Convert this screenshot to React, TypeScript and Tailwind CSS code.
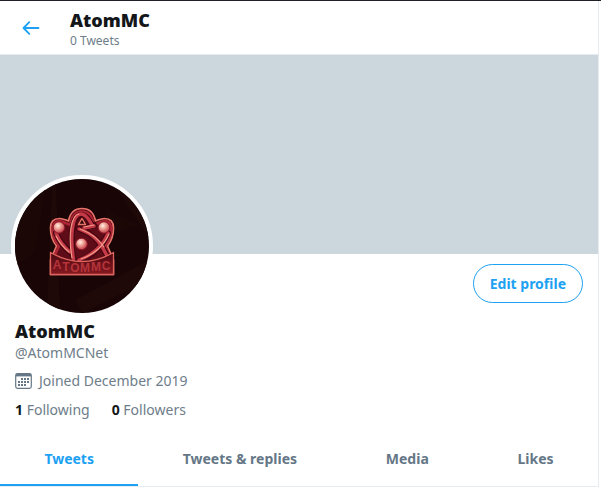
import { useState } from 'react';

const tabs = ['Tweets', 'Tweets & replies', 'Media', 'Likes'];

function BackArrow() {
  return (
    <svg width="18" height="16" viewBox="0 0 18 16" fill="none" stroke="#1da1f2" strokeWidth="1.8" strokeLinecap="round" strokeLinejoin="round" aria-hidden="true">
      <path d="M16.5 8H1.5M7.3 2.2L1.5 8l5.8 5.8" />
    </svg>
  );
}

function CalendarIcon() {
  return (
    <svg width="17" height="16" viewBox="0 0 17 16" aria-hidden="true">
      <rect x="0.7" y="0.7" width="15.6" height="14.6" rx="1.8" fill="none" stroke="#657786" strokeWidth="1.2" />
      <path d="M1 1h15v2.4H1z" fill="#657786" />
      <g fill="#657786">
        <path d="M6 5h2v2H6zM9 5h2v2H9zM12 5h2v2h-2z" />
        <path d="M3 8h2v2H3zM6 8h2v2H6zM9 8h2v2H9zM12 8h2v2h-2z" />
        <path d="M3 11h2v2H3zM6 11h2v2H6zM9 11h2v2H9z" />
      </g>
    </svg>
  );
}

function Avatar() {
  return (
    <svg className="block size-full" viewBox="15 179 134 134" role="img" aria-label="AtomMC logo">
      <defs>
        <radialGradient id="ball" cx="0.4" cy="0.35" r="0.65">
          <stop offset="0" stopColor="#fff1e8" />
          <stop offset="0.35" stopColor="#f3b0a2" />
          <stop offset="1" stopColor="#c23c46" />
        </radialGradient>
        <linearGradient id="plate" x1="0" y1="0" x2="0" y2="1">
          <stop offset="0" stopColor="#4d0812" />
          <stop offset="1" stopColor="#861820" />
        </linearGradient>
      </defs>
      <path d="M15 179h134v134H15z" fill="#190506" />
      <path d="M52 179l-5 134h13l-4-134zM110 179l39 59v-59zM75 300l74-40v20l-66 33z" fill="#1e0808" />
      <path d="M15 220l32-40-12 72-20 15zM105 210l35 15-28 9z" fill="#1c0707" />
      <path d="M50.500 274.500V260l6-14c-4-5-6-11-6-18 0-7 4-9.500 9-9.500 4 0 6 1.500 9 2.500 1.500-8 6-12.500 13.500-12.500S94 213 95.500 221c3-1 5-2.500 9-2.500 5 0 9 2.500 9 9.500s-2 13-6 18l6 14v14.500z" fill="#5e0c18" stroke="#e67469" strokeWidth="1.700" strokeLinejoin="round" />
      <path d="M53.500 258l5.500-12c-4-5-6.500-12-6-18 .5-6 4-7.500 8.500-6.500l9 3.500c1-8 4.500-13.500 11.500-13.500S92.500 217 93.500 225l9-3.500c5-1 8 .5 8.500 6.500s-2.500 13-6 18l5.500 12" fill="none" stroke="#ae2636" strokeWidth="2.600" />
      <g fill="none" strokeLinecap="round">
        <g stroke="#480611" strokeWidth="6">
          <path d="M73.500 260c-4-24-1-45 7.500-45 5 0 9 6 11 11" />
          <path d="M56 233c4 10 9 15 16 21M108 233c-5 13-17 24-30 28" />
          <path d="M79 229c14 5 21 12 28 27M81 228l13-3" />
        </g>
        <g stroke="#c43947" strokeWidth="3.400">
          <path d="M73.500 259c-4-24-1-45 7.500-45 5 0 9 7 11 11" />
          <path d="M56 233c4 10 9 15 14 19M108 233c-5 13-17 23-29 27" />
          <path d="M79 229c14 5 21 12 28 27M84 228l10-2" />
        </g>
        <g stroke="#f19a88" strokeWidth="1.200">
          <path d="M72 258c-4-23-1-43 7-44" />
          <path d="M56 236c4 8 8 12 13 16M109 234c-5 12-16 21-28 25" />
          <path d="M80 229c11 4 18 9 24 18M84 227l10-2" />
        </g>
      </g>
      <path d="M78.500 224.500l3.500-6 3.500 6z" fill="#2e060c" stroke="#e77468" strokeWidth="1.400" strokeLinejoin="round" />
      <g fill="url(#ball)" stroke="#8a1726" strokeWidth="1">
        <circle cx="59" cy="227.500" r="5.800" />
        <circle cx="104" cy="227.500" r="5.800" />
        <circle cx="81.500" cy="244" r="5.800" />
      </g>
      <path d="M50.500 274.500v-22q31.500 18 63 0v22z" fill="url(#plate)" stroke="#dd655d" strokeWidth="1.300" />
      <text textAnchor="middle" fill="#b5343a" className="font-['Liberation_Sans',sans-serif] text-[12px] font-bold">
        <tspan x="57" y="269">A</tspan>
        <tspan x="66" y="271">T</tspan>
        <tspan x="75" y="272">O</tspan>
        <tspan x="85" y="272">M</tspan>
        <tspan x="96" y="271">M</tspan>
        <tspan x="106" y="270">C</tspan>
      </text>
    </svg>
  );
}

export default function App() {
  const [active, setActive] = useState('Tweets');
  return (
    <div className="border-t border-[#202026] bg-white pr-0.5 font-['Noto_Sans','Open_Sans',sans-serif] text-[14px] leading-5 text-[#6e7d89]">
      <main className="border-r border-b border-[#e6ecf0]">
        <header className="flex h-[54px] items-center border-b border-[#e6ecf0] pl-[22px]">
          <button type="button" aria-label="Back" className="mr-[30px] cursor-pointer">
            <BackArrow />
          </button>
          <div className="pt-0.5">
            <h2 className="text-[18px] leading-6 font-black text-[#14171a]">AtomMC</h2>
            <p className="text-[12px] leading-[18px]">0 Tweets</p>
          </div>
        </header>
        <div className="h-[199px] bg-[#ccd6dd]" />
        <section className="px-[15px]">
          <div className="flex items-start justify-between pt-2.5">
            <div className="-mt-[89px] -ml-1 size-[142px] overflow-hidden rounded-full border-4 border-white">
              <Avatar />
            </div>
            <button type="button" className="h-[39px] cursor-pointer rounded-full border border-[#1da1f2] px-4 font-bold text-[#1da1f2]">
              Edit profile
            </button>
          </div>
          <h1 className="mt-0.5 text-[18px] leading-6 font-black text-[#14171a]">AtomMC</h1>
          <p>@AtomMCNet</p>
          <p className="mt-2 flex items-center gap-[7px]">
            <CalendarIcon />
            Joined December 2019
          </p>
          <div className="mt-[9px] flex gap-[22px]">
            <a href="#following"><strong className="font-bold text-[#14171a]">1</strong> Following</a>
            <a href="#followers"><strong className="font-bold text-[#14171a]">0</strong> Followers</a>
          </div>
        </section>
        <nav className="mt-3 flex">
          {tabs.map((tab) => (
            <button
              key={tab}
              type="button"
              onClick={() => setActive(tab)}
              className={`h-[54px] flex-auto cursor-pointer border-b-2 pt-0.5 font-bold ${active === tab ? 'border-[#1da1f2] text-[#1da1f2]' : 'border-transparent text-[#657786]'}`}
            >
              {tab}
            </button>
          ))}
        </nav>
      </main>
    </div>
  );
}
